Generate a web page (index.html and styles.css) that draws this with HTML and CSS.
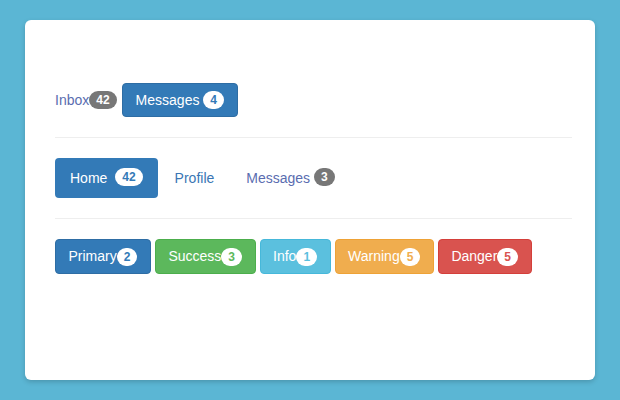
FILE: index.html
```html
<!DOCTYPE html>
<html>
<head>
<meta charset="utf-8">
<link rel="stylesheet" href="styles.css">
</head>
<body>
<div class="card">
  <div class="row row-first">
    <a class="link visited" href="#">Inbox<span class="badge">42</span></a>
    <button class="btn btn-primary btn-msg">Messages <span class="badge badge-light">4</span></button>
  </div>
  <hr class="sep">
  <ul class="pills">
    <li><a class="pill active" href="#">Home&nbsp;<span class="badge badge-light">42</span></a></li>
    <li><a class="pill link" href="#">Profile</a></li>
    <li><a class="pill link visited" href="#">Messages&nbsp;<span class="badge">3</span></a></li>
  </ul>
  <hr class="sep">
  <div class="row">
    <button class="btn btn-primary">Primary<span class="badge badge-light">2</span></button>
    <button class="btn btn-success">Success<span class="badge badge-light">3</span></button>
    <button class="btn btn-info">Info<span class="badge badge-light">1</span></button>
    <button class="btn btn-warning">Warning<span class="badge badge-light">5</span></button>
    <button class="btn btn-danger">Danger<span class="badge badge-light">5</span></button>
  </div>
</div>
</body>
</html>
```
FILE: styles.css
```css
html, body {
  margin: 0;
  padding: 0;
}
body {
  background: #5bb6d4;
  font-family: "Liberation Sans", Arial, sans-serif;
  font-size: 14px;
  line-height: 20px;
  color: #333;
  width: 620px;
  height: 400px;
  padding-top: 20px;
  box-sizing: border-box;
}
.card {
  margin: 0 25px;
  height: 360px;
  background: #fff;
  border-radius: 6px;
  box-shadow: 0 2px 5px rgba(0, 0, 0, 0.18);
  box-sizing: border-box;
  padding: 63px 23px 0 30px;
}
.row {
  display: flex;
  align-items: center;
  gap: 4px;
}
.link {
  color: #3a76b4;
  text-decoration: none;
}
.visited {
  color: #5a6db0;
}
.badge {
  display: inline-block;
  padding: 3px 7px;
  font-size: 12px;
  font-weight: bold;
  line-height: 12px;
  color: #fff;
  text-align: center;
  white-space: nowrap;
  vertical-align: middle;
  background: #777;
  border-radius: 10px;
  position: relative;
  top: -1px;
}
.btn {
  display: inline-block;
  font-family: inherit;
  font-size: 14px;
  line-height: 20px;
  padding: 6px 12.5px;
  border: 1px solid transparent;
  border-radius: 4px;
  color: #fff;
  cursor: pointer;
  margin: 0;
}
.btn-msg {
  margin-left: 1px;
  padding: 6px 13px;
}
.btn-primary { background: #337ab7; border-color: #2e6da4; }
.btn-success { background: #5cb85c; border-color: #4cae4c; }
.btn-info { background: #5bc0de; border-color: #46b8da; }
.btn-warning { background: #f0ad4e; border-color: #eea236; }
.btn-danger { background: #d9534f; border-color: #d43f3a; }
.badge-light { background: #fff; }
.btn-primary .badge-light, .pill.active .badge-light { color: #337ab7; }
.btn-success .badge-light { color: #5cb85c; }
.btn-info .badge-light { color: #5bc0de; }
.btn-warning .badge-light { color: #f0ad4e; }
.btn-danger .badge-light { color: #d9534f; }
.sep {
  border: 0;
  border-top: 1px solid #eee;
  margin: 20px 0;
  height: 0;
}
.pills {
  list-style: none;
  margin: 0;
  padding: 0;
  display: flex;
  gap: 2px;
}
.pill {
  display: flex;
  align-items: center;
  height: 40px;
  box-sizing: border-box;
  padding: 0 15px;
  border-radius: 4px;
  text-decoration: none;
  white-space: pre;
}
.pill.active {
  background: #337ab7;
  color: #fff;
}
.pill.active .badge {
  margin-left: 4px;
}
```
